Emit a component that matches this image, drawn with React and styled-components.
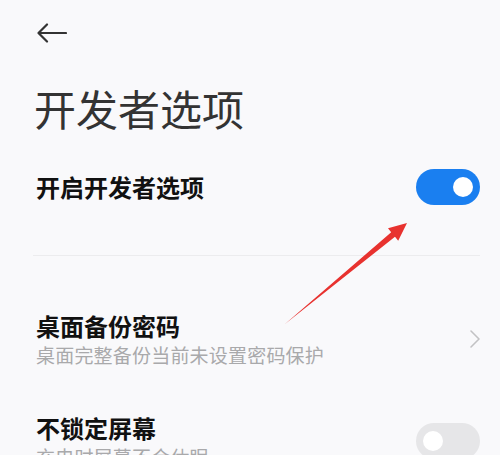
import styled, { createGlobalStyle } from 'styled-components'

const Global = createGlobalStyle`
  html, body {
    margin: 0;
    padding: 0;
    background: #f9f9fb;
  }
  body {
    font-family: "Noto Sans CJK SC", "Noto Sans", sans-serif;
  }
`

const Page = styled.div`
  position: relative;
  width: 500px;
  height: 455px;
  overflow: hidden;
  box-sizing: border-box;
  padding: 0 20px 0 36px;
  background: #f9f9fb;
`

const Header = styled.div`
  height: 66px;
  display: flex;
  align-items: center;
`

const Title = styled.h1`
  margin: 16px 0 0 -2px;
  font-size: 42px;
  line-height: 52px;
  font-weight: 400;
  color: #333;
`

const Row = styled.div`
  display: flex;
  align-items: center;
  justify-content: space-between;
  height: ${p => p.$h || 'auto'};
  margin-top: ${p => p.$mt || 0}px;
`

const Texts = styled.div`
  display: flex;
  flex-direction: column;
`

const Label = styled.div`
  font-size: 24px;
  line-height: 32px;
  font-weight: 600;
  color: #111;
`

const Sub = styled.div`
  font-size: 19px;
  line-height: 26px;
  letter-spacing: 0.2px;
  color: #a9a9ab;
  white-space: nowrap;
`

const Divider = styled.div`
  height: 1px;
  background: #ececee;
  margin: 31px 0 0 -3px;
`

const Switch = styled.div`
  width: 64px;
  height: 36px;
  border-radius: 18px;
  box-sizing: border-box;
  padding: 0 7px;
  display: flex;
  align-items: center;
  justify-content: ${p => (p.$on ? 'flex-end' : 'flex-start')};
  background: ${p => (p.$on ? '#1a7ff0' : '#e6e6e8')};
  flex-shrink: 0;
  &::after {
    content: '';
    width: 20px;
    height: 20px;
    border-radius: 50%;
    background: #fff;
  }
`

const Overlay = styled.svg`
  position: absolute;
  left: 0;
  top: 0;
  pointer-events: none;
`

function BackArrow() {
  return (
    <svg width="30" height="20" viewBox="0 0 30 20" style={{ marginLeft: 1 }}>
      <path d="M1.5 10 H29 M10 1.5 L1.5 10 L10 18.5" fill="none" stroke="#333" strokeWidth="2.2" strokeLinecap="round" strokeLinejoin="round" />
    </svg>
  )
}

function Chevron() {
  return (
    <svg width="12" height="20" viewBox="0 0 12 20" style={{ marginRight: -1 }}>
      <path d="M2 2 L10 10 L2 18" fill="none" stroke="#c2c2c4" strokeWidth="1.6" strokeLinecap="round" strokeLinejoin="round" />
    </svg>
  )
}

export default function App() {
  return (
    <>
      <Global />
      <Page>
        <Header>
          <BackArrow />
        </Header>
        <Title>开发者选项</Title>

        <Row $h="74px" $mt={16}>
          <Label>开启开发者选项</Label>
          <Switch $on />
        </Row>

        <Divider />

        <Row $mt={54}>
          <Texts>
            <Label>桌面备份密码</Label>
            <Sub>桌面完整备份当前未设置密码保护</Sub>
          </Texts>
          <Chevron />
        </Row>

        <Row $mt={44}>
          <Texts>
            <Label>不锁定屏幕</Label>
            <Sub>充电时屏幕不会休眠</Sub>
          </Texts>
          <Switch />
        </Row>

        <Overlay width="500" height="455" viewBox="0 0 500 455">
          <polygon
            points="285,324 391.2,232.2 388,228.3 407,223 398.2,240.7 395,236.8"
            fill="#e8322f"
          />
        </Overlay>
      </Page>
    </>
  )
}
